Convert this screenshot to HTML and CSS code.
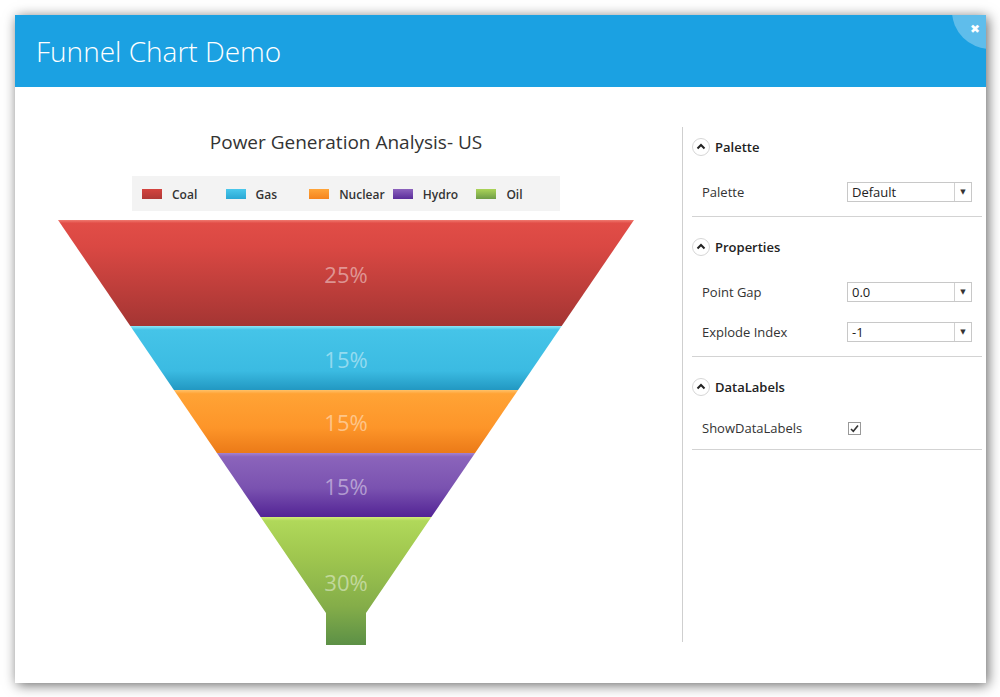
FILE: index.html
```html
<!DOCTYPE html>
<html>
<head>
	<title>Funnel Chart Demo</title>
	<link rel="stylesheet" href="styles.css">
</head>
<body>

	<div class="window">
		<div class="header">
			<h1 class="header-title">Funnel Chart Demo</h1>
			<div class="close-circle"></div>
			<span class="close-x">&#x2716;</span>
		</div>

		<div class="content">
			<div class="chart">
				<div class="chart-title">Power Generation Analysis- US</div>

				<div class="legend">
					<div class="legend-item"><span class="swatch coal"></span>Coal</div>
					<div class="legend-item"><span class="swatch gas"></span>Gas</div>
					<div class="legend-item"><span class="swatch nuclear"></span>Nuclear</div>
					<div class="legend-item"><span class="swatch hydro"></span>Hydro</div>
					<div class="legend-item"><span class="swatch oil"></span>Oil</div>
				</div>

				<svg class="funnel" width="576" height="425" viewBox="0 0 576 425">
					<defs>
						<linearGradient id="gCoal" x1="0" y1="0" x2="0" y2="1">
							<stop offset="0" stop-color="#f07a70"/>
							<stop offset="0.03" stop-color="#e14d47"/>
							<stop offset="0.25" stop-color="#da4843"/>
							<stop offset="1" stop-color="#a43533"/>
						</linearGradient>
						<linearGradient id="gGas" x1="0" y1="0" x2="0" y2="1">
							<stop offset="0" stop-color="#8ee6f7"/>
							<stop offset="0.06" stop-color="#45c4e8"/>
							<stop offset="0.7" stop-color="#3bbbe2"/>
							<stop offset="1" stop-color="#2298c2"/>
						</linearGradient>
						<linearGradient id="gNuclear" x1="0" y1="0" x2="0" y2="1">
							<stop offset="0" stop-color="#ffc168"/>
							<stop offset="0.06" stop-color="#ffa335"/>
							<stop offset="0.6" stop-color="#fd9529"/>
							<stop offset="1" stop-color="#eb7a18"/>
						</linearGradient>
						<linearGradient id="gHydro" x1="0" y1="0" x2="0" y2="1">
							<stop offset="0" stop-color="#a482cf"/>
							<stop offset="0.06" stop-color="#8b64bb"/>
							<stop offset="0.55" stop-color="#7a52b0"/>
							<stop offset="1" stop-color="#532495"/>
						</linearGradient>
						<linearGradient id="gOil" x1="0" y1="0" x2="0" y2="1">
							<stop offset="0" stop-color="#d2ee78"/>
							<stop offset="0.03" stop-color="#b0d85a"/>
							<stop offset="0.3" stop-color="#a0c74f"/>
							<stop offset="0.7" stop-color="#84ad49"/>
							<stop offset="1" stop-color="#5c9046"/>
						</linearGradient>
					</defs>

					<polygon fill="url(#gCoal)" points="0,0 576,0 503.7,106 72.3,106"/>
					<polygon fill="url(#gGas)" points="72.3,106 503.7,106 460.1,170 115.9,170"/>
					<polygon fill="url(#gNuclear)" points="115.9,170 460.1,170 417.1,233 158.9,233"/>
					<polygon fill="url(#gHydro)" points="158.9,233 417.1,233 373.4,297 202.6,297"/>
					<polygon fill="url(#gOil)" points="202.6,297 373.4,297 308,393 308,425 268,425 268,393"/>

					<text class="funnel-label" x="288" y="54">25%</text>
					<text class="funnel-label" x="288" y="139">15%</text>
					<text class="funnel-label" x="288" y="202">15%</text>
					<text class="funnel-label" x="288" y="266">15%</text>
					<text class="funnel-label" x="288" y="362">30%</text>
				</svg>
			</div>

			<div class="panel">
				<div class="section">
					<div class="section-head">
						<svg class="chevron" width="18" height="18" viewBox="0 0 18 18"><circle cx="9" cy="9" r="8.5" fill="#fff" stroke="#d6d6d6"/><path d="M5.5 10.5 L9 7 L12.5 10.5" fill="none" stroke="#222" stroke-width="2"/></svg>
						Palette
					</div>
					<div class="rows">
						<div class="row">
							<span class="row-label">Palette</span>
							<div class="dropdown"><span class="dropdown-value">Default</span><span class="dropdown-arrow">&#9660;</span></div>
						</div>
					</div>
				</div>

				<div class="section">
					<div class="section-head">
						<svg class="chevron" width="18" height="18" viewBox="0 0 18 18"><circle cx="9" cy="9" r="8.5" fill="#fff" stroke="#d6d6d6"/><path d="M5.5 10.5 L9 7 L12.5 10.5" fill="none" stroke="#222" stroke-width="2"/></svg>
						Properties
					</div>
					<div class="rows">
						<div class="row">
							<span class="row-label">Point Gap</span>
							<div class="dropdown"><span class="dropdown-value">0.0</span><span class="dropdown-arrow">&#9660;</span></div>
						</div>
						<div class="row">
							<span class="row-label">Explode Index</span>
							<div class="dropdown"><span class="dropdown-value">-1</span><span class="dropdown-arrow">&#9660;</span></div>
						</div>
					</div>
				</div>

				<div class="section">
					<div class="section-head">
						<svg class="chevron" width="18" height="18" viewBox="0 0 18 18"><circle cx="9" cy="9" r="8.5" fill="#fff" stroke="#d6d6d6"/><path d="M5.5 10.5 L9 7 L12.5 10.5" fill="none" stroke="#222" stroke-width="2"/></svg>
						DataLabels
					</div>
					<div class="rows">
						<div class="row row-check">
							<span class="row-label">ShowDataLabels</span>
							<svg class="checkbox" width="13" height="13" viewBox="0 0 13 13"><rect x="0.5" y="0.5" width="12" height="12" fill="#fff" stroke="#999"/><path d="M3 7 L5.3 9.3 L10 3.5" fill="none" stroke="#333" stroke-width="1.6"/></svg>
						</div>
					</div>
				</div>
			</div>
		</div>
	</div>

</body>
</html>
```

FILE: styles.css
```css
body{
	margin: 0;
	background: #fff;
	font-family: "Open Sans", "Liberation Sans", sans-serif;
	color: #333;
}

.window{
	margin: 15px;
	width: 971px;
	height: 668px;
	background: #fff;
	box-shadow: 2px 2px 12px rgba(0,0,0,.6);
	overflow: hidden;
}

.header{
	position: relative;
	height: 72px;
	background: #1ba1e2;
	overflow: hidden;
	display: flex;
	align-items: center;
	padding-left: 21px;
}

.header-title{
	margin: 0;
	color: #fff;
	font-size: 28px;
	font-weight: 300;
}

.close-circle{
	position: absolute;
	left: 937px;
	top: -42px;
	width: 76px;
	height: 76px;
	border-radius: 50%;
	background: rgba(255,255,255,.3);
}

.close-x{
	position: absolute;
	left: 955px;
	top: 7px;
	color: #fff;
	font-size: 12px;
	font-family: "DejaVu Sans", sans-serif;
}

.content{
	display: flex;
	padding-top: 40px;
}

/* chart column */
.chart{
	width: 662px;
	padding-right: 5px;
	display: flex;
	flex-direction: column;
	align-items: center;
}

.chart-title{
	margin-top: 3px;
	font-size: 19px;
	line-height: 24px;
	color: #333;
	margin-bottom: 22px;
}

.legend{
	width: 418px;
	height: 35px;
	padding-left: 10px;
	background: #f3f3f3;
	display: grid;
	grid-template-columns: repeat(5, 83.6px);
	align-items: center;
}

.legend-item{
	display: flex;
	align-items: center;
	padding-top: 1px;
	font-size: 12px;
	font-weight: 600;
	color: #333;
}

.swatch{
	width: 20px;
	height: 10px;
	margin-right: 10px;
}

.swatch.coal{ background: linear-gradient(#d4443f, #b03936); }
.swatch.gas{ background: linear-gradient(#4ac8ec, #2aa8d4); }
.swatch.nuclear{ background: linear-gradient(#ffa53a, #f5841e); }
.swatch.hydro{ background: linear-gradient(#8c62bd, #5a2d9b); }
.swatch.oil{ background: linear-gradient(#abd458, #6e9c47); }

.funnel{
	margin-top: 9px;
	display: block;
}

.funnel-label{
	font-family: "Open Sans", sans-serif;
	font-size: 22px;
	fill: rgba(255,255,255,.45);
	text-anchor: middle;
	dominant-baseline: central;
}

/* properties panel */
.panel{
	width: 290px;
	height: 515px;
	border-left: 1px solid #cfcfcf;
	padding-left: 9px;
	padding-right: 4px;
}

.section{
	padding-top: 10px;
	border-bottom: 1px solid #d3d3d3;
}

.section:first-child{
	padding-top: 0;
}

.section-head{
	height: 40px;
	display: flex;
	align-items: center;
	font-size: 13px;
	font-weight: 600;
	color: #222;
}

.chevron{
	margin-right: 5px;
}

.rows{
	padding: 5px 0 4px 10px;
}

.row{
	height: 40px;
	display: flex;
	align-items: center;
	font-size: 13px;
	color: #333;
}

.row-check{
	height: 32px;
	padding-bottom: 1px;
}

.row-label{
	width: 145px;
}

.dropdown{
	width: 123px;
	height: 18px;
	border: 1px solid #c8c8c8;
	display: flex;
	align-items: center;
	font-size: 13px;
	color: #222;
}

.dropdown-value{
	flex: 1;
	padding-left: 4px;
}

.dropdown-arrow{
	width: 16px;
	height: 18px;
	border-left: 1px solid #d0d0d0;
	font-size: 7px;
	line-height: 18px;
	text-align: center;
	color: #333;
	font-family: "DejaVu Sans", sans-serif;
}

.checkbox{
	margin-left: 1px;
}
```
